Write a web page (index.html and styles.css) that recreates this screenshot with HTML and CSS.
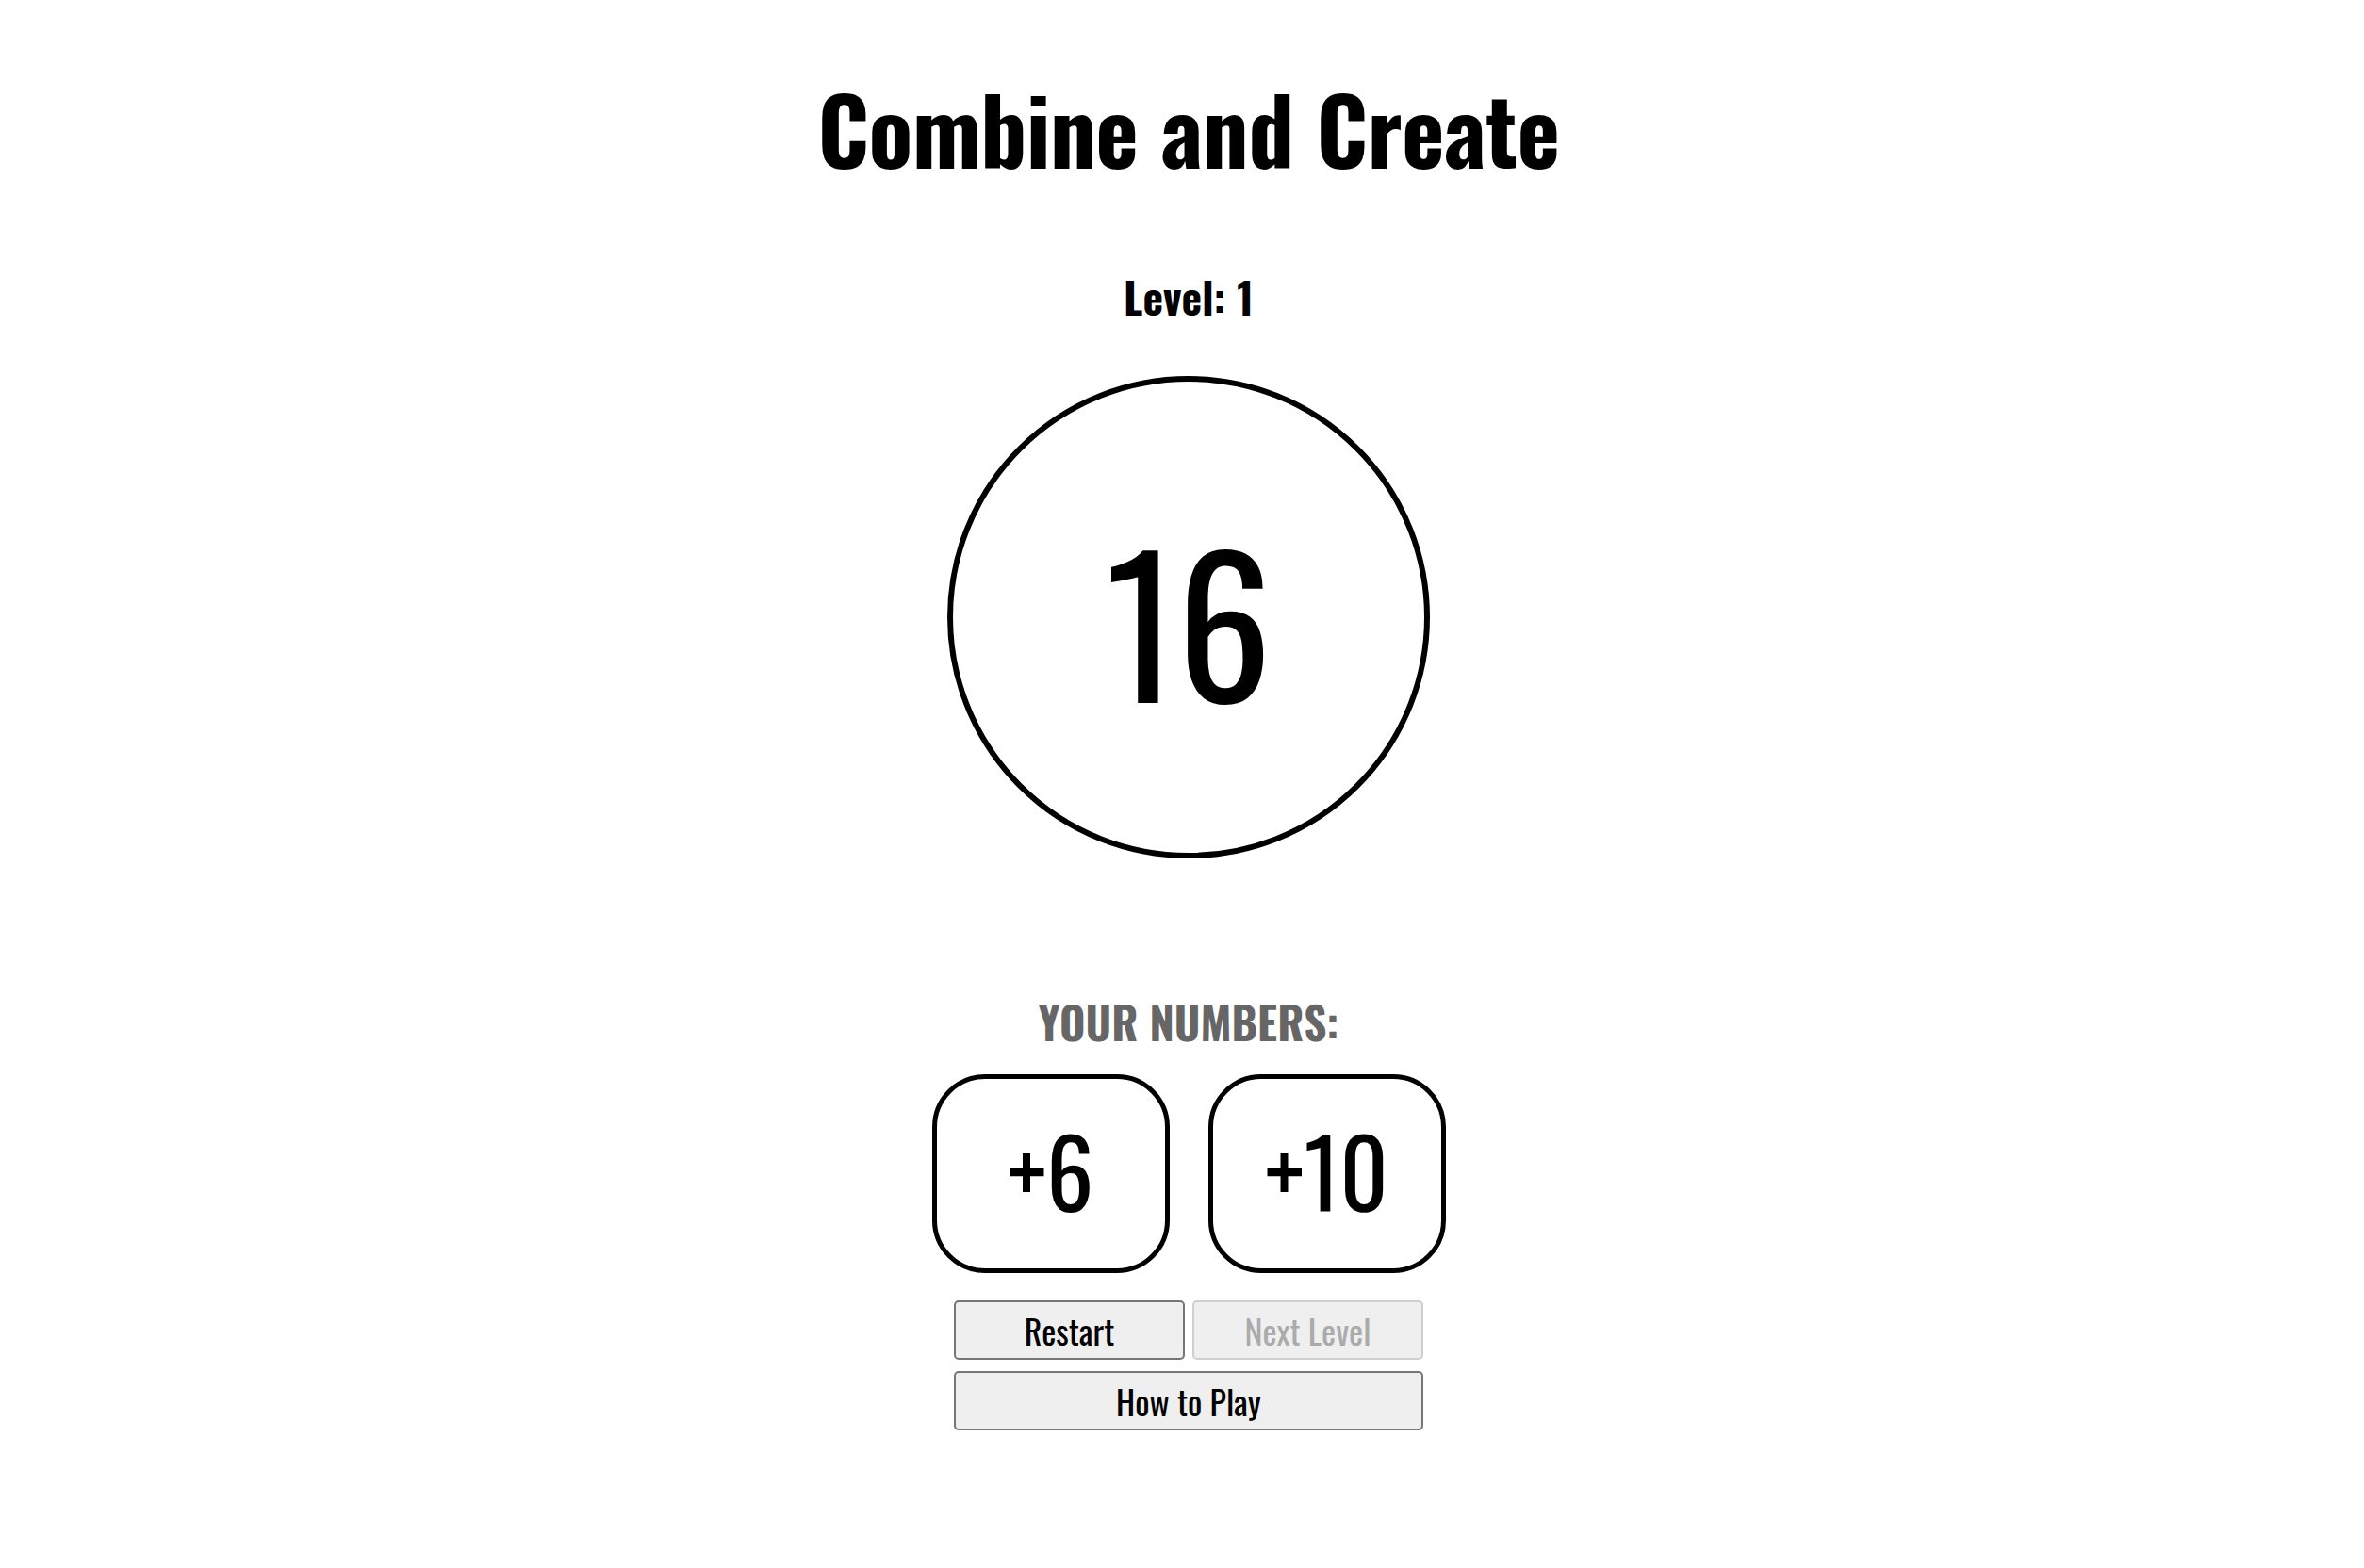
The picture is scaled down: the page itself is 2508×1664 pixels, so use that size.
FILE: index.html
```html
<!DOCTYPE html>
<html lang="en">
<head>
<meta charset="utf-8">
<title>Combine and Create</title>
<link rel="stylesheet" href="styles.css">
</head>
<body>
<main class="app">
  <h1 class="title">Combine and Create</h1>
  <div class="level">Level: 1</div>
  <div class="target"><span class="target-num">16</span></div>
  <div class="numbers-label">YOUR NUMBERS:</div>
  <div class="cards">
    <div class="card">+6</div>
    <div class="card">+10</div>
  </div>
  <div class="controls">
    <div class="row">
      <button class="btn">Restart</button>
      <button class="btn" disabled>Next Level</button>
    </div>
    <button class="btn wide">How to Play</button>
  </div>
</main>
</body>
</html>
```
FILE: styles.css
```css
html, body {
  margin: 0;
  padding: 0;
  background: #fff;
}
body {
  font-family: "Oswald", "Open Sans", sans-serif;
  color: #000;
}
.app {
  display: flex;
  flex-direction: column;
  align-items: center;
  padding-left: 14px;
}
.title {
  margin: 87px 0 0;
  font-size: 97px;
  letter-spacing: -0.6px;
  line-height: 1;
  font-weight: 700;
}
.level {
  margin-top: 107px;
  font-size: 46px;
  line-height: 1;
  font-weight: 700;
}
.target {
  margin-top: 62px;
  width: 512px;
  height: 512px;
  box-sizing: border-box;
  border: 6px solid #000;
  border-radius: 50%;
  padding-top: 2px;
  display: flex;
  align-items: center;
  justify-content: center;
}
.target-num {
  font-size: 200px;
  line-height: 1;
  font-weight: 400;
}
.numbers-label {
  margin-top: 150px;
  font-size: 47px;
  line-height: 1;
  font-weight: 700;
  color: #666;
}
.cards {
  margin-top: 32px;
  display: flex;
  gap: 41px;
}
.card {
  width: 252px;
  height: 211px;
  box-sizing: border-box;
  border: 5px solid #000;
  border-radius: 56px;
  padding-bottom: 10px;
  display: flex;
  align-items: center;
  justify-content: center;
  font-size: 100px;
  line-height: 1;
}
.controls {
  margin-top: 29px;
  width: 498px;
  display: flex;
  flex-direction: column;
  gap: 12px;
}
.row {
  display: flex;
  gap: 8px;
}
.btn {
  flex: 1;
  height: 63px;
  box-sizing: border-box;
  border: 2px solid #767676;
  border-radius: 5px;
  background: #efefef;
  font-family: inherit;
  font-size: 36px;
  line-height: 1;
  color: #000;
  padding: 0;
}
.btn:disabled {
  border-color: #cfcfcf;
  color: #ababab;
}
.wide {
  flex: none;
  width: 100%;
}
```
